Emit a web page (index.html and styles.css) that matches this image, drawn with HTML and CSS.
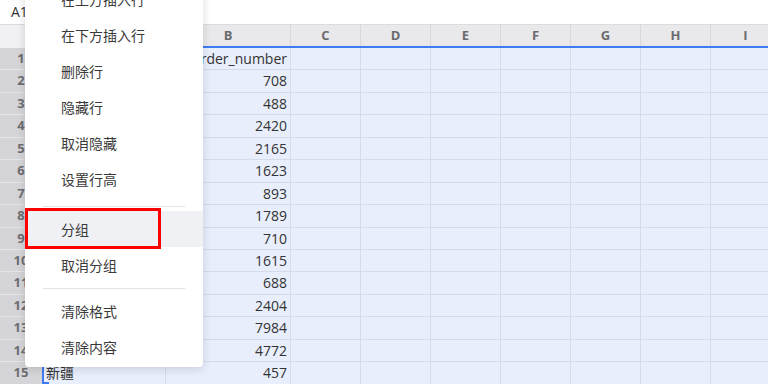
FILE: index.html
```html
<!DOCTYPE html>
<html lang="zh-CN">
<head>
    <meta charset="UTF-8">
    <meta name="viewport" content="width=device-width, initial-scale=1.0">
    <title>表格</title>
    <link rel="stylesheet" href="styles.css">
</head>
<body>
    <div class="name-bar"><span class="cell-ref">A1</span></div>

    <div class="sheet">
        <div class="row head">
            <div class="corner"></div><div class="col-h"></div><div class="col-h">B</div><div class="col-h">C</div><div class="col-h">D</div><div class="col-h">E</div><div class="col-h">F</div><div class="col-h">G</div><div class="col-h">H</div><div class="col-h">I</div>
        </div>
        <div class="row"><div class="row-h">1</div><div class="cell"></div><div class="cell num">order_number</div><div class="cell"></div><div class="cell"></div><div class="cell"></div><div class="cell"></div><div class="cell"></div><div class="cell"></div><div class="cell"></div></div>
        <div class="row"><div class="row-h">2</div><div class="cell"></div><div class="cell num">708</div><div class="cell"></div><div class="cell"></div><div class="cell"></div><div class="cell"></div><div class="cell"></div><div class="cell"></div><div class="cell"></div></div>
        <div class="row"><div class="row-h">3</div><div class="cell"></div><div class="cell num">488</div><div class="cell"></div><div class="cell"></div><div class="cell"></div><div class="cell"></div><div class="cell"></div><div class="cell"></div><div class="cell"></div></div>
        <div class="row"><div class="row-h">4</div><div class="cell"></div><div class="cell num">2420</div><div class="cell"></div><div class="cell"></div><div class="cell"></div><div class="cell"></div><div class="cell"></div><div class="cell"></div><div class="cell"></div></div>
        <div class="row"><div class="row-h">5</div><div class="cell"></div><div class="cell num">2165</div><div class="cell"></div><div class="cell"></div><div class="cell"></div><div class="cell"></div><div class="cell"></div><div class="cell"></div><div class="cell"></div></div>
        <div class="row"><div class="row-h">6</div><div class="cell"></div><div class="cell num">1623</div><div class="cell"></div><div class="cell"></div><div class="cell"></div><div class="cell"></div><div class="cell"></div><div class="cell"></div><div class="cell"></div></div>
        <div class="row"><div class="row-h">7</div><div class="cell"></div><div class="cell num">893</div><div class="cell"></div><div class="cell"></div><div class="cell"></div><div class="cell"></div><div class="cell"></div><div class="cell"></div><div class="cell"></div></div>
        <div class="row"><div class="row-h">8</div><div class="cell"></div><div class="cell num">1789</div><div class="cell"></div><div class="cell"></div><div class="cell"></div><div class="cell"></div><div class="cell"></div><div class="cell"></div><div class="cell"></div></div>
        <div class="row"><div class="row-h">9</div><div class="cell"></div><div class="cell num">710</div><div class="cell"></div><div class="cell"></div><div class="cell"></div><div class="cell"></div><div class="cell"></div><div class="cell"></div><div class="cell"></div></div>
        <div class="row"><div class="row-h">10</div><div class="cell"></div><div class="cell num">1615</div><div class="cell"></div><div class="cell"></div><div class="cell"></div><div class="cell"></div><div class="cell"></div><div class="cell"></div><div class="cell"></div></div>
        <div class="row"><div class="row-h">11</div><div class="cell"></div><div class="cell num">688</div><div class="cell"></div><div class="cell"></div><div class="cell"></div><div class="cell"></div><div class="cell"></div><div class="cell"></div><div class="cell"></div></div>
        <div class="row"><div class="row-h">12</div><div class="cell"></div><div class="cell num">2404</div><div class="cell"></div><div class="cell"></div><div class="cell"></div><div class="cell"></div><div class="cell"></div><div class="cell"></div><div class="cell"></div></div>
        <div class="row"><div class="row-h">13</div><div class="cell"></div><div class="cell num">7984</div><div class="cell"></div><div class="cell"></div><div class="cell"></div><div class="cell"></div><div class="cell"></div><div class="cell"></div><div class="cell"></div></div>
        <div class="row"><div class="row-h">14</div><div class="cell"></div><div class="cell num">4772</div><div class="cell"></div><div class="cell"></div><div class="cell"></div><div class="cell"></div><div class="cell"></div><div class="cell"></div><div class="cell"></div></div>
        <div class="row"><div class="row-h">15</div><div class="cell active">新疆</div><div class="cell num">457</div><div class="cell"></div><div class="cell"></div><div class="cell"></div><div class="cell"></div><div class="cell"></div><div class="cell"></div><div class="cell"></div></div>
    </div>

    <!-- контекстное меню строки -->
    <div class="context-menu">
        <div class="menu-item">在上方插入行</div>
        <div class="menu-item">在下方插入行</div>
        <div class="menu-item">删除行</div>
        <div class="menu-item">隐藏行</div>
        <div class="menu-item">取消隐藏</div>
        <div class="menu-item">设置行高</div>
        <div class="menu-divider wide"></div>
        <div class="menu-item hover">分组<span class="mark-box"></span></div>
        <div class="menu-item">取消分组</div>
        <div class="menu-divider"></div>
        <div class="menu-item">清除格式</div>
        <div class="menu-item">清除内容</div>
    </div>
</body>
</html>
```

FILE: styles.css
```css
html, body {
    margin: 0;
    padding: 0;
}

body {
    width: 768px;
    height: 384px;
    overflow: hidden;
    position: relative;
    background: #fff;
    font-family: "Open Sans", "Noto Sans CJK SC", sans-serif;
    color: #333;
}

.name-bar {
    height: 24px;
    border-bottom: 1px solid #dcdcde;
    padding-left: 11px;
}

.cell-ref {
    font-size: 14px;
    line-height: 23px;
    color: #333;
}

.sheet {
    width: 768px;
    overflow: hidden;
}

.row {
    display: grid;
    grid-template-columns: 42px 124px 125px repeat(7, 70px);
    height: 22.45px;
    box-sizing: border-box;
}

.row.head {
    height: 23px;
    background: #e9e9eb;
    border-bottom: 2px solid #3f7cf4;
}

.corner {
    background: #f1f1f3;
    margin-bottom: -2px;
}

.col-h {
    font-size: 13px;
    font-weight: 700;
    color: #6b6b6e;
    text-align: center;
    line-height: 21px;
    border-right: 1px solid #d8d8db;
}

.row-h {
    background: #d5d5d9;
    border-bottom: 1px solid #e6e6e8;
    font-size: 13px;
    font-weight: 700;
    color: #6e6e72;
    text-align: center;
    line-height: 21px;
}

.cell {
    background: #e8eefc;
    border-right: 1px solid #d5dbe8;
    border-bottom: 1px solid #d5dbe8;
    font-size: 14px;
    line-height: 21px;
    padding: 0 3px;
    white-space: nowrap;
    overflow: hidden;
}

.cell.num {
    text-align: right;
}

.cell.active {
    position: relative;
    font-family: "Noto Sans CJK SC", sans-serif;
    padding-left: 4px;
}

.cell.active::before {
    content: "";
    position: absolute;
    left: 0;
    top: 0;
    bottom: 0;
    width: 2px;
    background: #3f7cf4;
}

.cell.active::after {
    content: "";
    position: absolute;
    left: 0;
    top: 20px;
    width: 7px;
    height: 2px;
    background: #3f7cf4;
}

/* меню */
.context-menu {
    position: absolute;
    left: 25px;
    top: -19px;
    width: 178px;
    padding-bottom: 2px;
    background: #fff;
    border-radius: 0 0 4px 4px;
    box-shadow: 0 2px 10px rgba(0, 0, 0, 0.14);
    font-family: "Noto Sans CJK SC", sans-serif;
}

.menu-item {
    height: 36px;
    line-height: 36px;
    padding-left: 36px;
    font-size: 14px;
    color: #3a3a3a;
    position: relative;
}

.menu-item.hover {
    background: #f0f1f4;
}

.mark-box {
    position: absolute;
    left: 0;
    top: -3px;
    width: 136px;
    height: 41px;
    border: 3px solid #ff0000;
    box-sizing: border-box;
}

.menu-divider {
    height: 1px;
    background: #e3e3e6;
    margin: 5px 18px 4px;
}

.menu-divider.wide {
    margin-top: 9px;
}
```
